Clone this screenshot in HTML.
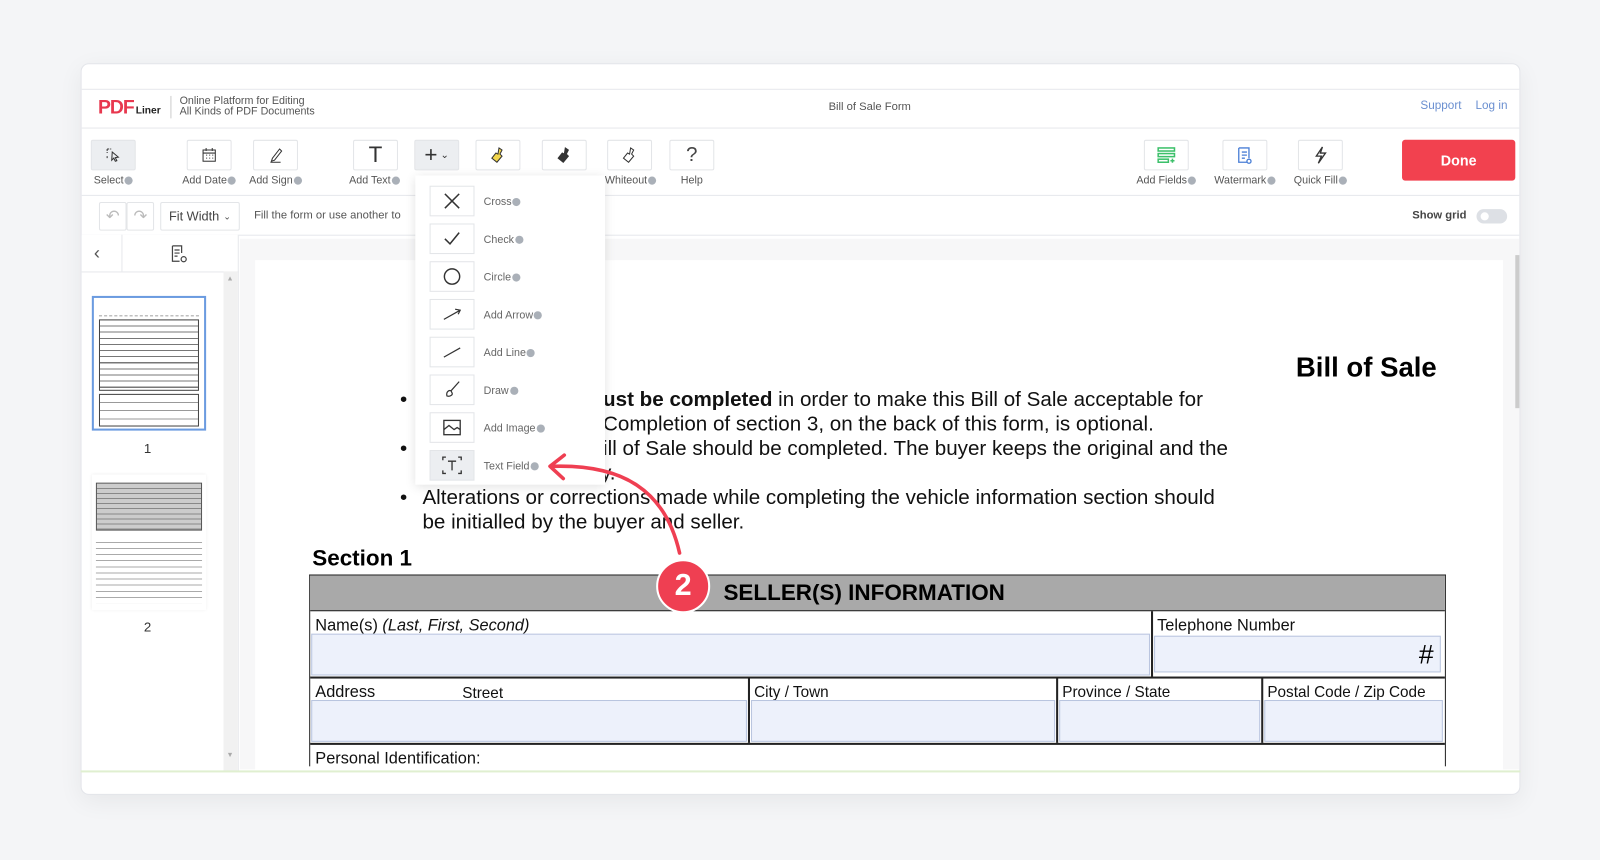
<!DOCTYPE html>
<html><head><meta charset="utf-8"><style>
*{box-sizing:border-box;margin:0;padding:0}
body{width:1600px;height:860px;overflow:hidden;background:#f4f5f7;font-family:"Liberation Sans",sans-serif}
#w{position:absolute;left:0;top:0;width:1568px;height:843px;transform:scale(1.0204);transform-origin:0 0}
.a{position:absolute}
.card{left:79px;top:62px;width:1411px;height:717px;background:#fff;border:1px solid #e3e5ea;border-radius:8px;box-shadow:0 6px 24px rgba(0,0,0,.06);overflow:hidden}
.hl{height:1px;background:#e6e8ec}
.btn{width:44px;height:30px;border:1px solid #e3e5e8;border-radius:2px;background:#fff;display:flex;align-items:center;justify-content:center}
.lbl{font-size:10.5px;color:#555;white-space:nowrap;text-align:center}
.q{display:inline-block;width:8px;height:8px;border-radius:50%;background:#aab0b8;vertical-align:-1px;margin-left:1px}
.dd{left:407px;top:172px;width:186px;height:303px;background:#fff;box-shadow:0 2px 10px rgba(0,0,0,.12)}
.it{position:absolute;left:14px;width:44px;height:30px;border:1px solid #e3e5e8;display:flex;align-items:center;justify-content:center}
.itl{position:absolute;left:67px;font-size:10.5px;color:#666}
.doc{font-size:20.2px;color:#111;white-space:nowrap}
.inp{background:#edf1fb;border:1px solid #b9c5df}
.tl{font-size:16px;color:#111;white-space:nowrap}
</style></head><body><div id="w">
<div class="a card">
 <div class="a hl" style="left:0;top:24px;width:100%"></div>
 <div class="a hl" style="left:0;top:62px;width:100%"></div>
 <div class="a hl" style="left:0;top:128px;width:100%"></div>
 <div class="a hl" style="left:0;top:167px;width:100%"></div>
</div>
<!-- header -->
<div class="a" style="left:96px;top:95px;font-weight:bold;font-size:19px;color:#e8384f;letter-spacing:-1px">PDF<span style="font-size:10px;color:#222;letter-spacing:0;margin-left:2px">Liner</span></div>
<div class="a" style="left:167px;top:94px;width:1px;height:22px;background:#ccc"></div>
<div class="a" style="left:176px;top:94px;font-size:10.5px;color:#555;line-height:10px">Online Platform for Editing<br>All Kinds of PDF Documents</div>
<div class="a" style="left:812px;top:99px;font-size:11px;color:#555">Bill of Sale Form</div>
<div class="a" style="left:1392px;top:98px;font-size:11.5px;color:#6a8fd0">Support</div>
<div class="a" style="left:1446px;top:98px;font-size:11.5px;color:#6a8fd0">Log in</div>
<!-- toolbar -->
<div class="a btn" style="left:89px;top:137px;background:#eceef1"><svg width="16" height="16" viewBox="0 0 16 16" fill="none" stroke="#333"><path d="M2 2h4M2 2v4M2 9v3" stroke-dasharray="2 1"/><path d="M7 5l6 5-3 .5 1.5 3-1.5.5-1.5-3-2 2z"/></svg></div>
<div class="a lbl" style="left:84px;top:171px;width:54px">Select<span class="q"></span></div>
<div class="a btn" style="left:183px;top:137px"><svg width="16" height="16" viewBox="0 0 16 16" fill="none" stroke="#333"><rect x="2" y="3" width="12" height="11"/><path d="M2 6h12M5 1v3M11 1v3M5 8h1M8 8h1M11 8h1M5 11h1M8 11h1M11 11h1"/></svg></div>
<div class="a lbl" style="left:174px;top:171px;width:62px">Add Date<span class="q"></span></div>
<div class="a btn" style="left:248px;top:137px"><svg width="16" height="18" viewBox="0 0 16 18" fill="none" stroke="#333"><path d="M5 12l7-9 2 2-7 9-3 1zM3 16h10"/></svg></div>
<div class="a lbl" style="left:240px;top:171px;width:60px">Add Sign<span class="q"></span></div>
<div class="a btn" style="left:346px;top:137px;font-size:22px;color:#333">T</div>
<div class="a lbl" style="left:336px;top:171px;width:62px">Add Text<span class="q"></span></div>
<div class="a btn" style="left:406px;top:137px;background:#eceef1;font-size:22px;color:#333">+<span style="font-size:10px;margin-left:3px">&#8964;</span></div>
<div class="a btn" style="left:466px;top:137px"><svg width="14" height="16" viewBox="0 0 14 16"><path d="M8 1l3 2-2 4 2 2-5 6-5-4 4-5 2 1z" fill="#f2d64b" stroke="#333"/></svg></div>
<div class="a btn" style="left:531px;top:137px"><svg width="14" height="16" viewBox="0 0 14 16"><path d="M8 1l3 2-2 4 2 2-5 6-5-4 4-5 2 1z" fill="#333" stroke="#333"/></svg></div>
<div class="a btn" style="left:595px;top:137px"><svg width="14" height="16" viewBox="0 0 14 16"><path d="M8 1l3 2-2 4 2 2-5 6-5-4 4-5 2 1z" fill="#fff" stroke="#333"/></svg></div>
<div class="a lbl" style="left:588px;top:171px;width:60px">Whiteout<span class="q"></span></div>
<div class="a btn" style="left:656px;top:137px;font-size:20px;color:#444">?</div>
<div class="a lbl" style="left:656px;top:171px;width:44px">Help</div>
<div class="a btn" style="left:1121px;top:137px"><svg width="18" height="16" viewBox="0 0 18 16" fill="none" stroke="#3cc06a" stroke-width="1.5"><rect x="1" y="1" width="16" height="3"/><rect x="1" y="6.5" width="16" height="3"/><rect x="1" y="12" width="10" height="3"/><path d="M13 13.5h4M15 11.5v4"/></svg></div>
<div class="a lbl" style="left:1110px;top:171px;width:66px">Add Fields<span class="q"></span></div>
<div class="a btn" style="left:1198px;top:137px"><svg width="16" height="17" viewBox="0 0 16 17" fill="none" stroke="#4a7fd6" stroke-width="1.3"><path d="M2 1h10v10M2 1v14h8"/><path d="M5 5h5M5 8h5M5 11h3"/><circle cx="12" cy="14" r="2"/></svg></div>
<div class="a lbl" style="left:1186px;top:171px;width:68px">Watermark<span class="q"></span></div>
<div class="a btn" style="left:1272px;top:137px"><svg width="14" height="18" viewBox="0 0 14 18" fill="none" stroke="#333" stroke-width="1.3"><path d="M9 1L3 10h5l-3 7 7-10H7z"/></svg></div>
<div class="a lbl" style="left:1262px;top:171px;width:64px">Quick Fill<span class="q"></span></div>
<div class="a" style="left:1374px;top:137px;width:111px;height:40px;background:#f2414f;border-radius:3px;color:#fff;font-weight:bold;font-size:14px;display:flex;align-items:center;justify-content:center">Done</div>
<!-- subtoolbar -->
<div class="a btn" style="left:97px;top:198px;width:27px;height:28px;color:#bbb;font-size:16px">&#8630;</div>
<div class="a btn" style="left:124px;top:198px;width:27px;height:28px;color:#bbb;font-size:16px">&#8631;</div>
<div class="a btn" style="left:157px;top:198px;width:78px;height:28px;font-size:12.5px;color:#444">Fit Width <span style="font-size:9px;margin-left:4px">&#8964;</span></div>
<div class="a" style="left:249px;top:205px;font-size:11px;color:#555">Fill the form or use another to</div>
<div class="a" style="left:1384px;top:205px;font-size:11px;color:#444;font-weight:bold">Show grid</div>
<div class="a" style="left:1447px;top:205px;width:30px;height:14px;border-radius:7px;background:#dde0e5"><div class="a" style="left:4px;top:3px;width:8px;height:8px;border-radius:50%;background:#fff"></div></div>
<!-- sidebar -->
<div class="a" style="left:80px;top:230px;width:154px;height:526px;background:#fff;border-right:1px solid #e6e8ec"></div>
<div class="a hl" style="left:80px;top:266px;width:154px"></div>
<div class="a" style="left:119px;top:230px;width:1px;height:36px;background:#e6e8ec"></div>
<div class="a" style="left:92px;top:238px;font-size:18px;color:#555">&#8249;</div>
<div class="a" style="left:167px;top:240px"><svg width="18" height="18" viewBox="0 0 18 18" fill="none" stroke="#444" stroke-width="1.2"><path d="M2 1h9v7M2 1v15h7M4 5h5M4 8h5M4 11h3"/><circle cx="13" cy="14" r="2.5"/></svg></div>
<div class="a" style="left:219px;top:266px;width:14px;height:490px;background:#f1f1f1"></div>
<div class="a" style="left:222px;top:270px;font-size:7px;color:#aaa">&#9650;</div>
<div class="a" style="left:222px;top:737px;font-size:7px;color:#aaa">&#9660;</div>
<div class="a" style="left:90px;top:290px;width:112px;height:132px;border:2px solid #6b9be0;background:#fff;padding:10px 5px">
 <div style="height:8px;border-bottom:1px dashed #aaa;margin-bottom:3px"></div>
 <div style="height:70px;border:1px solid #444;background:repeating-linear-gradient(#fff 0 5px,#777 5px 6px)"></div>
 <div style="height:32px;margin-top:3px;border:1px solid #444;background:repeating-linear-gradient(#fff 0 7px,#999 7px 8px)"></div>
</div>
<div class="a" style="left:141px;top:432px;font-size:13px;color:#333">1</div>
<div class="a" style="left:90px;top:465px;width:112px;height:133px;background:#fff;box-shadow:0 0 3px rgba(0,0,0,.1);padding:8px 4px">
 <div style="height:47px;border:1px solid #555;background:repeating-linear-gradient(#ccc 0 4px,#888 4px 5px)"></div>
 <div style="height:65px;margin-top:6px;background:repeating-linear-gradient(#fff 0 5px,#aaa 5px 6px)"></div>
</div>
<div class="a" style="left:141px;top:607px;font-size:13px;color:#333">2</div>
<!-- doc area -->
<div class="a" style="left:235px;top:234px;width:1254px;height:520px;background:#f7f7f8"></div>
<div class="a" style="left:1485px;top:250px;width:4px;height:150px;background:#ccc"></div>
<div class="a" style="left:250px;top:255px;width:1223px;height:500px;background:#fff"></div>
<div class="a" style="left:1270px;top:345px;font-size:27px;font-weight:bold;color:#000">Bill of Sale</div>
<div class="a doc" style="left:392px;top:381px">•</div>
<div class="a doc" style="left:591px;top:381px"><b>ust be completed</b> in order to make this Bill of Sale acceptable for</div>
<div class="a doc" style="left:591px;top:405px">Completion of section 3, on the back of this form, is optional.</div>
<div class="a doc" style="left:392px;top:429px">•</div>
<div class="a doc" style="left:591px;top:429px">ill of Sale should be completed. The buyer keeps the original and the</div>
<div class="a doc" style="left:589px;top:453px">y.</div>
<div class="a doc" style="left:392px;top:477px">•</div>
<div class="a doc" style="left:414px;top:477px">Alterations or corrections made while completing the vehicle information section should</div>
<div class="a doc" style="left:414px;top:501px">be initialled by the buyer and seller.</div>
<div class="a" style="left:306px;top:534px;font-size:22px;font-weight:bold">Section 1</div>
<div class="a" style="left:303px;top:563px;width:1114px;height:188px;border:1.5px solid #222;border-bottom:none"></div>
<div class="a" style="left:304px;top:564px;width:1112px;height:35px;background:#a9a9a9;border-bottom:1.5px solid #222;font-weight:bold;font-size:22px;line-height:34px;padding-left:405px">SELLER(S) INFORMATION</div>
<div class="a" style="left:304px;top:663px;width:1112px;height:1.5px;background:#222"></div>
<div class="a" style="left:304px;top:728px;width:1112px;height:1.5px;background:#222"></div>
<div class="a" style="left:1128px;top:599px;width:1.5px;height:64px;background:#222"></div>
<div class="a" style="left:733px;top:664px;width:1.5px;height:64px;background:#222"></div>
<div class="a" style="left:1035px;top:664px;width:1.5px;height:64px;background:#222"></div>
<div class="a" style="left:1236px;top:664px;width:1.5px;height:64px;background:#222"></div>
<div class="a tl" style="left:309px;top:605px">Name(s) <i>(Last, First, Second)</i></div>
<div class="a tl" style="left:1134px;top:605px">Telephone Number</div>
<div class="a inp" style="left:305px;top:621px;width:822px;height:41px"></div>
<div class="a inp" style="left:1131px;top:623px;width:281px;height:36px;text-align:right;font-size:26px;padding-right:6px;line-height:34px">#</div>
<div class="a tl" style="left:309px;top:670px">Address</div>
<div class="a tl" style="left:453px;top:671px;font-size:15px">Street</div>
<div class="a tl" style="left:739px;top:670px;font-size:15px">City / Town</div>
<div class="a tl" style="left:1041px;top:670px;font-size:15px">Province / State</div>
<div class="a tl" style="left:1242px;top:670px;font-size:15px">Postal Code / Zip Code</div>
<div class="a inp" style="left:305px;top:686px;width:427px;height:41px"></div>
<div class="a inp" style="left:736px;top:686px;width:298px;height:41px"></div>
<div class="a inp" style="left:1038px;top:686px;width:197px;height:41px"></div>
<div class="a inp" style="left:1239px;top:686px;width:175px;height:41px"></div>
<div class="a tl" style="left:309px;top:735px">Personal Identification:</div>
<div class="a" style="left:79px;top:755px;width:1411px;height:2px;background:#e0efd0"></div>
<!-- dropdown -->
<div class="a dd">
 <div class="it" style="top:10px"><svg width="18" height="18" stroke="#333" stroke-width="1.5"><path d="M2 2l14 14M16 2L2 16"/></svg></div><div class="itl" style="top:20px">Cross<span class="q"></span></div>
 <div class="it" style="top:47px"><svg width="18" height="18" fill="none" stroke="#333" stroke-width="1.5"><path d="M2 9l5 5 9-11"/></svg></div><div class="itl" style="top:57px">Check<span class="q"></span></div>
 <div class="it" style="top:84px"><svg width="18" height="18" fill="none" stroke="#333" stroke-width="1.4"><circle cx="9" cy="9" r="7.5"/></svg></div><div class="itl" style="top:94px">Circle<span class="q"></span></div>
 <div class="it" style="top:121px"><svg width="18" height="18" fill="none" stroke="#333" stroke-width="1.2"><path d="M1 14L17 5M12 4l5 1-2 4"/></svg></div><div class="itl" style="top:131px">Add Arrow<span class="q"></span></div>
 <div class="it" style="top:158px"><svg width="18" height="18" fill="none" stroke="#333" stroke-width="1.2"><path d="M1 14L17 5"/></svg></div><div class="itl" style="top:168px">Add Line<span class="q"></span></div>
 <div class="it" style="top:195px"><svg width="18" height="18" fill="none" stroke="#333" stroke-width="1.2"><path d="M16 1l-8 9M8 10c-2-1-5 1-4 5 3 1 6-1 5-3z"/></svg></div><div class="itl" style="top:205px">Draw<span class="q"></span></div>
 <div class="it" style="top:232px"><svg width="18" height="16" fill="none" stroke="#333" stroke-width="1.3"><rect x="1" y="1" width="16" height="14"/><path d="M1 10l5-4 5 4 3-2 3 2"/></svg></div><div class="itl" style="top:242px">Add Image<span class="q"></span></div>
 <div class="it" style="top:269px;background:#eceef1"><svg width="20" height="18" fill="none" stroke="#333" stroke-width="1.3"><path d="M1 4V1h3M16 1h3v3M1 14v3h3M16 17h3v-3M6 5h8M10 5v9"/></svg></div><div class="itl" style="top:279px">Text Field<span class="q"></span></div>
</div>
<!-- arrow + badge -->
<svg class="a" style="left:0;top:0" width="1568" height="843"><path d="M666 542 C652 480 610 455 542 457" fill="none" stroke="#ef3f52" stroke-width="3.5" stroke-linecap="round"/><path d="M553 446 L539 457 L552 469" fill="none" stroke="#ef3f52" stroke-width="3.5" stroke-linecap="round" stroke-linejoin="round"/></svg>
<div class="a" style="left:643px;top:548px;width:53px;height:53px;border-radius:50%;background:#ef3f52;border:2px solid #fff;color:#fff;font-size:30px;font-weight:bold;text-align:center;line-height:48px">2</div>
</div></body></html>
